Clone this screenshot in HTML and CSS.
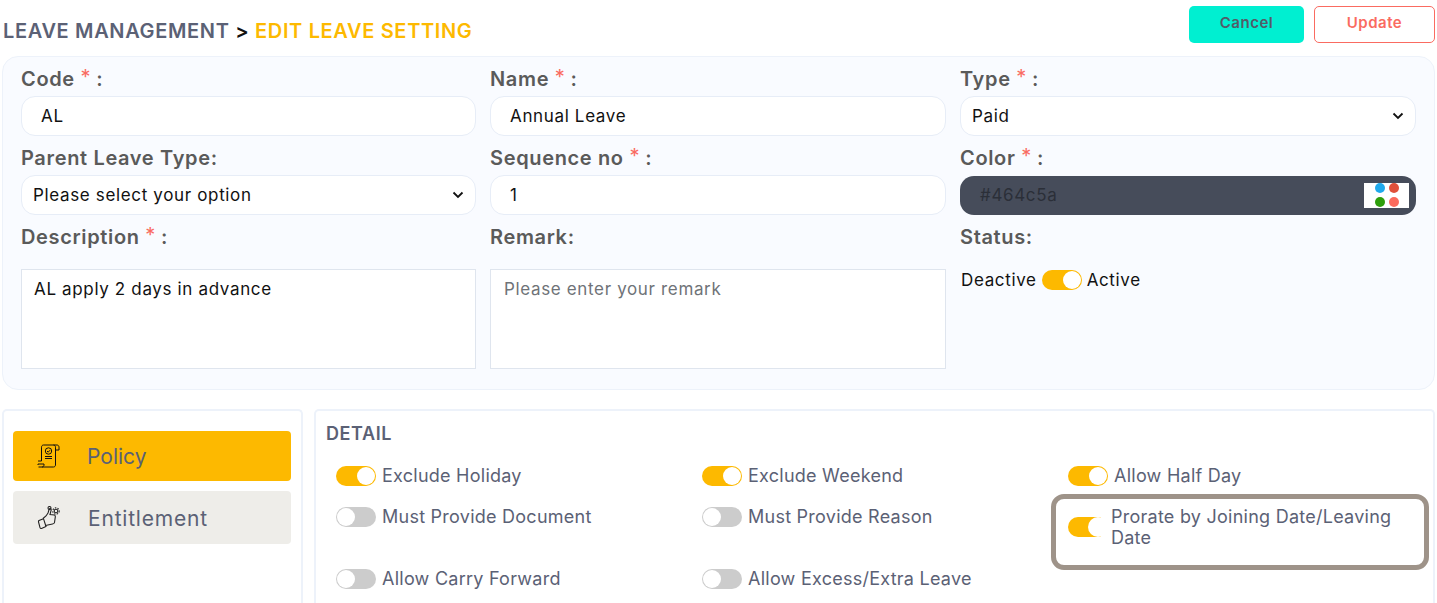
FILE: index.html
```html
<!DOCTYPE html>
<html lang="en">
<head>
<meta charset="utf-8">
<title>Edit Leave Setting</title>
<link rel="stylesheet" href="styles.css">
</head>
<body>
<header class="topbar">
  <h1 class="crumb"><span class="crumb-a">LEAVE MANAGEMENT</span> <span class="crumb-sep">&gt;</span> <span class="crumb-b">EDIT LEAVE SETTING</span></h1>
  <div class="actions">
    <button class="btn btn-cancel">Cancel</button>
    <button class="btn btn-update">Update</button>
  </div>
</header>
<section class="form-card">
  <div class="field">
    <label class="lbl">Code <i>*</i> :</label>
    <div class="ctl ctl-input pad-20">AL</div>
  </div>
  <div class="field">
    <label class="lbl">Name <i>*</i> :</label>
    <div class="ctl ctl-input pad-20">Annual Leave</div>
  </div>
  <div class="field">
    <label class="lbl">Type <i>*</i> :</label>
    <div class="ctl ctl-input pad-12">Paid<svg class="chev" viewBox="0 0 12 8"><path d="M1.500 1.500 6 6l4.500-4.500" fill="none" stroke="#111" stroke-width="1.800"/></svg></div>
  </div>
  <div class="field">
    <label class="lbl">Parent Leave Type:</label>
    <div class="ctl ctl-input pad-12">Please select your option<svg class="chev" viewBox="0 0 12 8"><path d="M1.500 1.500 6 6l4.500-4.500" fill="none" stroke="#111" stroke-width="1.800"/></svg></div>
  </div>
  <div class="field">
    <label class="lbl">Sequence no <i>*</i> :</label>
    <div class="ctl ctl-input pad-20">1</div>
  </div>
  <div class="field">
    <label class="lbl">Color <i>*</i> :</label>
    <div class="ctl ctl-color">#464c5a
      <svg class="swatch" viewBox="0 0 45 25"><rect width="45" height="25" fill="#fff"/><circle cx="16" cy="5" r="5" fill="#1fa9ec"/><circle cx="30" cy="5" r="5" fill="#e0503a"/><circle cx="16" cy="19" r="5" fill="#2e9e0c"/><circle cx="30" cy="19" r="5" fill="#fb6a5c"/></svg>
    </div>
  </div>
  <div class="field field-tall">
    <label class="lbl">Description <i>*</i> :</label>
    <div class="ctl-area">AL apply 2 days in advance</div>
  </div>
  <div class="field field-tall">
    <label class="lbl">Remark:</label>
    <div class="ctl-area ctl-ph">Please enter your remark</div>
  </div>
  <div class="field field-tall">
    <label class="lbl">Status:</label>
    <div class="status"><span>Deactive</span><span class="sw on"></span><span>Active</span></div>
  </div>
</section>
<section class="lower">
  <aside class="side">
    <div class="tab tab-on">
      <svg class="tab-ico" viewBox="0 0 24 24" fill="none" stroke="#111" stroke-width="1"><path d="M4.500 17V3.200C4.500 2 5.300 1 6.500 1H20c1.200 0 2 1 2 2.200V6h-3.500M18.500 3.200V21c0 1.200-.9 2-2 2H1.500M5 23c1.200 0 2-1 2-2v-1H1v1M4.500 17H1M16.500 1c1.200 0 2 1 2 2.200"/><circle cx="11.500" cy="7" r="3.200"/><path d="m10 7 1.200 1.200L13 6.200M8 12.500h7M8 14.500h7"/></svg>
      <span class="tab-t tab-t1">Policy</span>
    </div>
    <div class="tab tab-off">
      <svg class="tab-ico" viewBox="0 0 24 24" fill="none" stroke="#222" stroke-width="1.100"><path d="M6 12.500 9 10l2-3 1.200-4c.7-1 2.200-.2 2 1L13 8.500l4.300.5c.9.200 1.100 1 1 2l-.8 5.500c-.2 1-1 1.300-2 1.500L8.500 19.500"/><path d="m2 14.500 4.500-1.800 2.500 7.800-4.500 2c-.8.2-1.300-.2-1.500-.8L1.500 16q-.2-1 .5-1.500Z"/><circle cx="19" cy="5" r="1.800"/><circle cx="19" cy="5" r="3.200" stroke-dasharray="1.500 1.200"/><circle cx="12.500" cy="2" r="1.500"/></svg>
      <span class="tab-t tab-t2">Entitlement</span>
    </div>
  </aside>
  <div class="detail">
    <h2 class="detail-h">DETAIL</h2>
    <div class="opts">
      <div class="opt"><span class="sw on"></span><span>Exclude Holiday</span></div>
      <div class="opt"><span class="sw on"></span><span>Exclude Weekend</span></div>
      <div class="opt"><span class="sw on"></span><span>Allow Half Day</span></div>
      <div class="opt"><span class="sw"></span><span>Must Provide Document</span></div>
      <div class="opt"><span class="sw"></span><span>Must Provide Reason</span></div>
      <div class="opt opt-mark"><span class="sw on sw-open"></span><span>Prorate by Joining Date/Leaving Date</span></div>
      <div class="opt"><span class="sw"></span><span>Allow Carry Forward</span></div>
      <div class="opt"><span class="sw"></span><span>Allow Excess/Extra Leave</span></div>
    </div>
  </div>
</section>
</body>
</html>
```
FILE: styles.css
```css
* { box-sizing: border-box; }
html, body { height: 603px; overflow: hidden; }
body { margin: 0; background: #fff; font-family: Inter, "Liberation Sans", sans-serif; color: #000; }
.topbar { display: flex; justify-content: space-between; height: 56px; padding: 6px 2px 0 3px; }
.crumb { margin: 12px 0 0; font-size: 20px; line-height: 26px; font-weight: 600; letter-spacing: .65px; white-space: nowrap; }
.crumb-a { color: #5b6175; }
.crumb-sep { color: #111; }
.crumb-b { color: #fdb900; }
.actions { display: flex; gap: 10px; }
.btn { height: 37px; border-radius: 5px; font: 600 15px/32px Inter, sans-serif; letter-spacing: .5px; padding: 0 0 4px; }
.btn-cancel { width: 115px; background: #00efd1; border: 0; color: #525b68; }
.btn-update { width: 121px; background: #fff; border: 1px solid #fa6b61; color: #fa6b61; }
.form-card { margin: 0 2px; height: 334px; background: #f9fbff; border: 1px solid #edf2fa; border-radius: 16px; padding: 9px 18px 0; display: grid; grid-template-columns: 455px 456px 456px; column-gap: 14px; grid-template-rows: 79px 79px 1fr; }
.field { min-width: 0; }
.lbl { display: block; height: 30px; font-size: 20px; line-height: 27px; font-weight: 600; letter-spacing: .65px; color: #5a5a5a; }
.lbl i { font-style: normal; font-weight: 400; color: #fa6b61; vertical-align: 2px; line-height: 0; letter-spacing: 0; }
.ctl { height: 40px; border-radius: 14px; font-size: 17px; letter-spacing: .65px; display: flex; align-items: center; justify-content: space-between; }
.ctl-input { background: #fff; border: 1px solid #e7edf7; color: #111; }
.pad-20 { padding: 0 19px; }
.pad-12 { padding: 0 11px 0 11px; }
.chev { width: 12px; height: 8px; }
.ctl-color { background: #464c5a; color: #2b2f38; padding: 0 7px 1px 20px; height: 39px; margin-top: 1px; }
.swatch { width: 45px; height: 25px; }
.field-tall .lbl { height: 45px; }
.ctl-area { height: 100px; background: #fff; border: 1px solid #dfe5ee; padding: 7px 12px; font-size: 17px; letter-spacing: .65px; line-height: 24px; color: #111; }
.ctl-ph { color: #6f7378; padding-left: 13px; }
.status { display: flex; align-items: center; gap: 5px; padding-left: 1px; font-size: 17px; letter-spacing: .65px; color: #111; height: 30px; margin-top: -4px; }
.sw { position: relative; display: block; flex: none; width: 40px; height: 20px; border-radius: 10px; background: #ccc; }
.sw::after { content: ""; position: absolute; top: 1px; left: 1px; width: 18px; height: 18px; border-radius: 50%; background: #fff; }
.sw.on { background: #fdb900; }
.sw.on::after { left: 21px; }
.sw.sw-open { background: linear-gradient(to right, #fdb900 33px, transparent 33px); }
.sw.sw-open::after { top: 0; left: 20px; width: 20px; height: 20px; }
.lower { display: grid; grid-template-columns: 301px 1121px; column-gap: 11px; margin: 19px 0 0 2px; height: 200px; }
.side { border: 2px solid #edf2fa; border-bottom: 0; border-radius: 5px 5px 0 0; padding: 20px 10px 0 9px; display: flex; flex-direction: column; gap: 10px; }
.tab { display: flex; align-items: center; border-radius: 4px; padding-left: 24px; }
.tab-on { height: 50px; background: #fdb900; }
.tab-off { height: 53px; background: #eeede9; }
.tab-ico { width: 24px; height: 24px; flex: none; }
.tab-t { margin-left: 26px; font-size: 21px; color: #5b6175; }
.tab-t2 { margin: 2px 0 0 27px; letter-spacing: .8px; }
.detail { border: 2px solid #edf2fa; border-bottom: 0; border-radius: 5px 5px 0 0; padding: 13px 10px 0; }
.detail-h { margin: 0; font-size: 18px; line-height: 20px; font-weight: 600; letter-spacing: .6px; color: #5b6175; }
.opts { display: grid; grid-template-columns: 366px 366px 366px; grid-template-rows: 41px 62px 40px; margin-top: 22px; }
.opt { display: flex; align-items: flex-start; gap: 6px; padding-left: 10px; font-size: 18px; letter-spacing: .25px; line-height: 19px; color: #5b6175; }
.opt-mark { position: relative; align-items: center; align-self: start; height: 42px; margin-top: -1px; padding-right: 20px; gap: 3px; line-height: 21px; }
.opt-mark::after { content: ""; position: absolute; left: -7px; right: -5px; top: -12px; height: 66px; border: 5px solid #9e9389; border-radius: 13px; pointer-events: none; }
```
